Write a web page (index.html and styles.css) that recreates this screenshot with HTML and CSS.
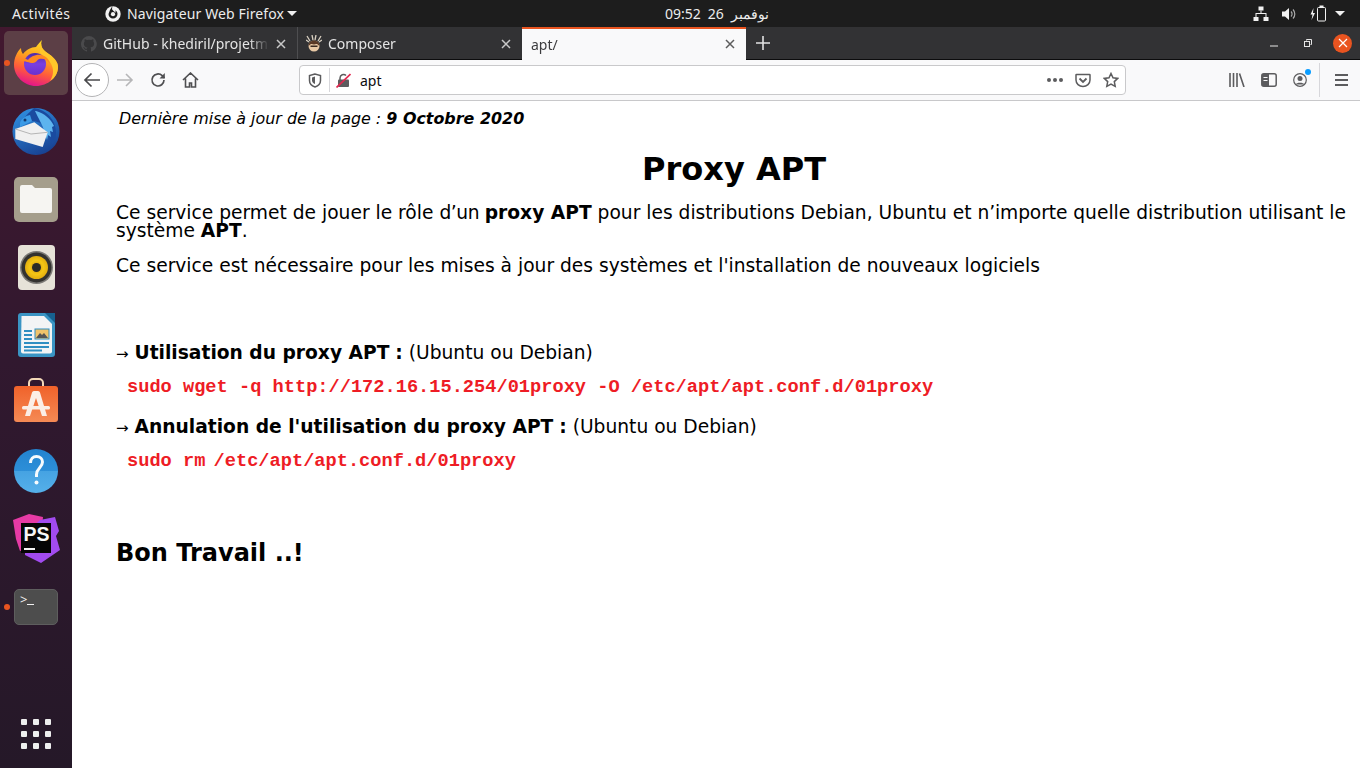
FILE: index.html
```html
<!DOCTYPE html>
<html lang="fr">
<head>
    <meta charset="UTF-8">
    <title>apt/</title>
    <link rel="stylesheet" href="styles.css">
</head>
<body>
    <div class="topbar">
        <span class="activities">Activités</span>
        <div class="app-menu">
            <svg class="app-icon" width="16" height="16" viewBox="0 0 16 16"><circle cx="8" cy="8" r="7.700" fill="#f2f2f2"/><path d="M3.500 8a4.500 4.500 0 0 0 9 0c0-1.700-.9-3-2.200-3.800l.5 2.600L8.500 5 7 3.300 7.400 0 5 4z" fill="#1d1d1d"/><circle cx="8" cy="8.200" r="2.100" fill="#f2f2f2"/></svg>
            <span class="app-name">Navigateur Web Firefox</span>
            <i class="caret"></i>
        </div>
        <div class="clock"><span>09:52</span><span>26</span><span lang="ar">نوفمبر</span></div>
        <div class="tray">
            <svg width="16" height="16" viewBox="0 0 16 16" fill="#f2f2f2"><rect x="5.500" y="0.500" width="5" height="4"/><rect x="0.500" y="11" width="5" height="4"/><rect x="10.500" y="11" width="5" height="4"/><path d="M7.500 4.500h1V7H13.500v4h-1V8H3.500v3h-1V7h5z"/></svg>
            <svg width="16" height="16" viewBox="0 0 16 16"><path d="M1 5.500h3L8 2v12l-4-3.500H1z" fill="#f2f2f2"/><path d="M10 5.500a3.500 3.500 0 0 1 0 5M12 3.500a6.500 6.500 0 0 1 0 9" fill="none" stroke="#aaa" stroke-width="1.200"/></svg>
            <svg width="20" height="18" viewBox="0 0 20 18"><path d="M4.500 3 1.500 9.500h2L2.500 15l3.500-7H4z" fill="#f2f2f2"/><rect x="8.500" y="2.500" width="8" height="13.500" rx="1" fill="none" stroke="#f2f2f2"/><rect x="10.500" y="0.500" width="4" height="2" fill="#f2f2f2"/></svg>
            <i class="caret tray-caret"></i>
        </div>
    </div>

    <div class="desktop">
        <nav class="dock">
            <div class="dock-item active">
                <i class="dot"></i>
                <svg width="44" height="46" viewBox="0 0 44 46">
                    <defs>
                        <linearGradient id="fxOuter" x1="0.700" y1="0" x2="0.400" y2="1"><stop offset="0" stop-color="#ffe226"/><stop offset="0.400" stop-color="#ffa21e"/><stop offset="0.700" stop-color="#ff5a3c"/><stop offset="1" stop-color="#e3148c"/></linearGradient>
                        <linearGradient id="fxGlobe" x1="0.500" y1="0" x2="0.500" y2="1"><stop offset="0" stop-color="#4c2aa8"/><stop offset="0.500" stop-color="#7a3fe0"/><stop offset="1" stop-color="#6a30d0"/></linearGradient>
                    </defs>
                    <path d="M28 0c-2 5 0 9 4 12 8 5 12 10 12 15 0 10-10 19-22 19S0 36 0 25c0-7 3-13 7-17 0 3 1 5 2 6 3-4 8-7 13-7 2-3 4-5 6-7z" fill="url(#fxOuter)"/>
                    <path d="M28 0c-2 5 0 9 4 12 8 5 12 10 12 15 0 6-3 11-8 14 3-5 4-10 2-15-2-6-8-10-12-13 0-5 1-9 2-13z" fill="#ffc72a"/>
                    <circle cx="21" cy="24" r="11" fill="url(#fxGlobe)"/>
                    <path d="M5 20c4-2 7-1 9 0 2-3 8-6 13-5 5 1 8 4 9 9-3-4-6-6-11-5-2 1-3 4-6 4-4 0-7-2-14-3z" fill="#ff8a1f"/>
                </svg>
            </div>
            <div class="dock-item">
                <svg width="48" height="48" viewBox="0 0 48 48">
                    <defs><linearGradient id="tbBg" x1="0.200" y1="0" x2="0.700" y2="1"><stop offset="0" stop-color="#2f8fe0"/><stop offset="1" stop-color="#173f90"/></linearGradient></defs>
                    <circle cx="24" cy="24.500" r="23.500" fill="url(#tbBg)"/>
                    <path d="M10 16C13 8 18 5 22 1c8 1 16 6 20 15 3 8 3 16-2 22-1-4-3-8-5-10l-2-8C28 14 20 12 10 16z" fill="#1a4ba0"/>
                    <path d="M24 4c8 2 15 8 18 15l-2 1 1 5-3-1 1 6-3-2-1 5-3-9c-1-6-6-13-9-20z" fill="#5db4ee"/>
                    <path d="M3.300 22 22.300 15.300 35.700 25.300 30.700 40 3.300 32z" fill="#f0f0f0"/>
                    <path d="M3.300 22 19 27 35.700 25.300" fill="none" stroke="#b5b5b5"/>
                    <path d="M8 16c1-4 5-7 10-8l2 6-12 6z" fill="#3a9ae6"/>
                    <circle cx="13" cy="13" r="1.500" fill="#123a70"/>
                </svg>
            </div>
            <div class="dock-item">
                <svg width="44" height="45" viewBox="0 0 44 45">
                    <rect width="44" height="45" rx="5" fill="#a59e8c"/>
                    <path d="M6 10a2 2 0 0 1 2-2h10l3 3h15a2 2 0 0 1 2 2v21a2 2 0 0 1-2 2H8a2 2 0 0 1-2-2z" fill="#f6f5f2"/>
                </svg>
            </div>
            <div class="dock-item">
                <svg width="37" height="45" viewBox="0 0 37 45">
                    <defs><radialGradient id="rbCone"><stop offset="0.200" stop-color="#d89f10"/><stop offset="0.600" stop-color="#f4c615"/><stop offset="1" stop-color="#e3ae0f"/></radialGradient></defs>
                    <rect width="37" height="45" rx="4" fill="#e6e2d8"/>
                    <circle cx="18.500" cy="22.500" r="16.500" fill="#7c7a76"/>
                    <circle cx="18.500" cy="22.500" r="15" fill="#33322f"/>
                    <circle cx="18.500" cy="22.500" r="11.500" fill="url(#rbCone)"/>
                    <circle cx="18.500" cy="22.500" r="4.500" fill="#2a2a28"/>
                </svg>
            </div>
            <div class="dock-item">
                <svg width="37" height="44" viewBox="0 0 37 44">
                    <path d="M3 0h34v41a3 3 0 0 1-3 3H3a3 3 0 0 1-3-3V3a3 3 0 0 1 3-3z" fill="#3a94c4"/>
                    <path d="M3.500 3H26l8 8v27.500a2 2 0 0 1-2 2H5a2 2 0 0 1-2-2z" fill="#f3f4f5"/>
                    <path d="M27 0h10v10z" fill="#16608f"/>
                    <g fill="#2f8ec2"><rect x="6" y="17" width="8" height="2"/><rect x="6" y="21" width="8" height="2"/><rect x="6" y="25" width="8" height="2"/><rect x="6" y="29" width="25" height="2"/><rect x="6" y="33" width="25" height="2"/><rect x="6" y="36.500" width="18" height="2"/></g>
                    <rect x="17" y="16" width="14" height="10" fill="#f0c36a" stroke="#2f8ec2"/>
                    <path d="M18 25l4-5 2 2 2-2 4 5z" fill="#555"/>
                </svg>
            </div>
            <div class="dock-item">
                <svg class="shop-icon" width="44" height="44" viewBox="0 0 44 44">
                    <defs><linearGradient id="shopBg" x1="0" y1="0" x2="0" y2="1"><stop offset="0" stop-color="#f0622a"/><stop offset="1" stop-color="#f58a55"/></linearGradient></defs>
                    <path d="M15 9V5a4 4 0 0 1 4-4h6a4 4 0 0 1 4 4v4" fill="none" stroke="#f3d9b8" stroke-width="2"/>
                    <rect y="8" width="44" height="36" rx="3" fill="url(#shopBg)"/>
                    <path d="M20 13h4a2 2 0 0 1 2 1.500l7 23.500h-5l-6-18-6 18h-5l7-23.500a2 2 0 0 1 2-1.500z" fill="#fbeee6"/>
                    <rect x="8" y="28" width="28" height="3.500" rx="1.500" fill="#fbeee6"/>
                </svg>
            </div>
            <div class="dock-item">
                <svg width="46" height="46" viewBox="0 0 46 46">
                    <defs><linearGradient id="helpBg" x1="0" y1="0" x2="0" y2="1"><stop offset="0" stop-color="#2383cf"/><stop offset="0.500" stop-color="#2d8fd8"/><stop offset="0.510" stop-color="#46a3e2"/><stop offset="1" stop-color="#55b0ea"/></linearGradient></defs>
                    <circle cx="23" cy="23" r="22" fill="url(#helpBg)"/>
                    <path d="M17.500 15c0-4 2.500-6.500 6-6.500s6 2.300 6 5.500c0 5.500-6 6-6 12.500v2.500" fill="none" stroke="#f7fbfd" stroke-width="3"/>
                    <circle cx="23.500" cy="34.500" r="2" fill="#f7fbfd"/>
                </svg>
            </div>
            <div class="dock-item">
                <svg width="48" height="50" viewBox="0 0 48 50">
                    <path d="M1 6 17 0l14 3-3 30-20 4-4-12z" fill="#e63aa5"/>
                    <path d="M28 6 43 3l4 14-3 5 4 14-19 13-16-8V20z" fill="#a24bf0"/>
                    <rect x="9" y="9" width="30" height="30" fill="#050505"/>
                    <text class="ps-text" x="11.500" y="27">PS</text>
                    <rect x="12" y="34" width="11" height="2" fill="#f4f4f4"/>
                </svg>
            </div>
            <div class="dock-item">
                <i class="dot"></i>
                <div class="term"><span>&gt;</span><b></b></div>
            </div>
            <div class="apps-grid">
                <i></i><i></i><i></i><i></i><i></i><i></i><i></i><i></i><i></i>
            </div>
        </nav>

        <div class="browser">
            <div class="tabbar">
                <div class="tab">
                    <svg class="favicon" width="16" height="16" viewBox="0 0 16 16"><path d="M8 0a8 8 0 0 0-2.500 15.600c.4.100.5-.2.500-.4v-1.400c-2.200.5-2.700-1-2.700-1-.4-.9-.9-1.200-.9-1.200-.7-.5.100-.5.100-.5.800.1 1.200.8 1.200.8.700 1.200 1.900.9 2.300.7.100-.5.300-.9.500-1.100-1.800-.2-3.600-.9-3.600-4 0-.9.300-1.600.8-2.100-.1-.2-.4-1 .1-2.100 0 0 .7-.2 2.200.8a7.600 7.600 0 0 1 4 0c1.500-1 2.200-.8 2.200-.8.500 1.100.2 1.900.1 2.100.5.600.8 1.300.8 2.100 0 3.100-1.900 3.700-3.700 3.900.3.300.6.800.6 1.500v2.200c0 .2.100.5.600.4A8 8 0 0 0 8 0z" fill="#4a4a4c"/></svg>
                    <span class="tab-title">GitHub - khediril/projetm</span>
                    <svg class="tab-close" width="12" height="12" viewBox="0 0 12 12"><path d="M2 2l8 8M10 2l-8 8" stroke="#c8c8c8" stroke-width="1.500"/></svg>
                </div>
                <div class="tab with-sep">
                    <svg class="favicon composer-icon" width="16" height="17" viewBox="0 0 16 17"><path d="M1 1l3 5M15 1l-3 5M0 5l3 2M16 5l-3 2M6 0l1 5M10 0L9 5" stroke="#d8cfc0" stroke-width="1.300"/><circle cx="8" cy="11" r="5.500" fill="#e9c9a5"/><path d="M2.500 11a5.500 5.500 0 0 1 11 0c-2-2.500-3.500-2.500-5.500-1.500-2-1-3.500-1-5.500 1.500z" fill="#5b3a26"/><rect x="4.500" y="10.500" width="7" height="1.500" fill="#3a2a20"/></svg>
                    <span class="tab-title">Composer</span>
                    <svg class="tab-close" width="12" height="12" viewBox="0 0 12 12"><path d="M2 2l8 8M10 2l-8 8" stroke="#c8c8c8" stroke-width="1.500"/></svg>
                </div>
                <div class="tab selected">
                    <span class="tab-title">apt/</span>
                    <svg class="tab-close" width="12" height="12" viewBox="0 0 12 12"><path d="M2 2l8 8M10 2l-8 8" stroke="#5c5c5c" stroke-width="1.500"/></svg>
                </div>
                <svg class="new-tab" width="14" height="14" viewBox="0 0 14 14"><path d="M7 0v14M0 7h14" stroke="#e2e2e2" stroke-width="1.600"/></svg>
                <div class="win-controls">
                    <svg width="10" height="10" viewBox="0 0 10 10"><rect x="1" y="7.500" width="8" height="1" fill="#e6e6e6"/></svg>
                    <svg width="10" height="10" viewBox="0 0 10 10" fill="none" stroke="#e6e6e6"><rect x="1.500" y="3.500" width="5" height="5"/><path d="M3.500 2.500V1.500h5v5h-1"/></svg>
                    <div class="win-close"><svg width="10" height="10" viewBox="0 0 10 10"><path d="M1 1l8 8M9 1l-8 8" stroke="#fff" stroke-width="1.200"/></svg></div>
                </div>
            </div>

            <div class="toolbar">
                <div class="back-btn"><svg width="18" height="16" viewBox="0 0 18 16" fill="none" stroke="#4a4a4c" stroke-width="1.700"><path d="M17 8H2M8.500 1.500 2 8l6.500 6.500"/></svg></div>
                <svg class="tool" width="17" height="16" viewBox="0 0 17 16" fill="none" stroke="#b6b6b8" stroke-width="1.600"><path d="M0 8h15M9 2l6 6-6 6"/></svg>
                <svg class="tool" width="16" height="16" viewBox="0 0 16 16" fill="none" stroke="#4f4f51" stroke-width="1.700"><path d="M14 8a6 6 0 1 1-1.800-4.300L14.500 6"/><path d="M14.800 1v5.500H9.500" fill="#4f4f51" stroke="none"/></svg>
                <svg class="tool" width="17" height="16" viewBox="0 0 17 16" fill="none" stroke="#4f4f51" stroke-width="1.600"><path d="M1 8 8.500 1 16 8M3.500 6.500V15h4v-4h2v4h4V6.500"/></svg>
                <div class="urlbar">
                    <svg class="shield" width="14" height="15" viewBox="0 0 14 15" fill="none"><path d="M7 1 1.500 2.500v5C1.500 11 4 13 7 14c3-1 5.500-3 5.500-6.500v-5z" stroke="#5c5c5e" stroke-width="1.500"/><path d="M7 3.500 4 4.500v3C4 9.500 5.500 10.500 7 11z" fill="#5c5c5e"/></svg>
                    <i class="url-sep"></i>
                    <svg class="lock" width="15" height="15" viewBox="0 0 15 15"><path d="M4 7V5a3.500 3.500 0 0 1 6-2.400" fill="none" stroke="#5c5c5e" stroke-width="1.500"/><rect x="2" y="6.500" width="11" height="7.500" rx="1" fill="#5c5c5e"/><path d="M.5 14.500 14.500 1" stroke="#e22850" stroke-width="1.700"/></svg>
                    <span class="url-text">apt</span>
                    <span class="url-dots"><i></i><i></i><i></i></span>
                    <svg width="16" height="15" viewBox="0 0 16 15" fill="none" stroke="#5c5c5e" stroke-width="1.500"><path d="M1.500 1.500h13a.5.5 0 0 1 .5.500v5a7 6.500 0 0 1-14 0V2a.5.5 0 0 1 .5-.5z"/><path d="M4.500 5.500 8 9l3.500-3.500" stroke-width="1.800"/></svg>
                    <svg width="16" height="16" viewBox="0 0 16 16" fill="none" stroke="#5c5c5e" stroke-width="1.500"><path d="m8 1.500 2 4.300 4.700.6-3.400 3.200.9 4.700L8 12l-4.200 2.300.9-4.700L1.300 6.400 6 5.800z"/></svg>
                </div>
                <div class="tool-group">
                    <svg width="16" height="14" viewBox="0 0 16 14" fill="none" stroke="#5c5c5e" stroke-width="1.600"><path d="M1 0v14M4.500 0v14M8 0v14M10.500.5l4.500 13.500"/></svg>
                    <svg width="16" height="14" viewBox="0 0 16 14" fill="none" stroke="#5c5c5e" stroke-width="1.500"><rect x=".8" y=".8" width="14.400" height="12.400" rx="2"/><rect x="1" y="1" width="7" height="12" fill="#5c5c5e" stroke="none"/><path d="M2.500 4.500h4M2.500 7.500h4" stroke="#f9f9fa" stroke-width="1.200"/></svg>
                    <span class="account"><svg width="14" height="14" viewBox="0 0 14 14" fill="none" stroke="#5c5c5e"><circle cx="7" cy="7" r="6.300" stroke-width="1.200"/><circle cx="7" cy="5.500" r="2.500" fill="#5c5c5e" stroke="none"/><path d="M2.500 11.500c1-2.500 8-2.500 9 0z" fill="#5c5c5e" stroke="none"/></svg><i></i></span>
                    <i class="tool-sep"></i>
                    <svg width="13" height="12" viewBox="0 0 13 12" fill="#5c5c5e"><rect width="13" height="2"/><rect y="5" width="13" height="2"/><rect y="10" width="13" height="2"/></svg>
                </div>
            </div>

            <main class="page">
                <p class="updated">Dernière mise à jour de la page : <b>9 Octobre 2020</b></p>
                <h1>Proxy APT</h1>
                <p>Ce service permet de jouer le rôle <span class="tight">d’un </span><b>proxy APT</b> pour les distributions Debian, Ubuntu et <span class="tight-less">n’importe</span> quelle distribution utilisant le système <b>APT</b>.</p>
                <p>Ce service est nécessaire pour les mises à jour des systèmes et l'installation de nouveaux logiciels</p>
                <p class="step first-step"><span class="arrow">→</span> <b>Utilisation du proxy APT</b> <b>:</b> (Ubuntu ou Debian)</p>
                <pre>sudo wget -q http://172.16.15.254/01proxy -O /etc/apt/apt.conf.d/01proxy</pre>
                <p class="step"><span class="arrow">→</span> <b>Annulation de l'utilisation du proxy APT</b> <b>:</b> (Ubuntu ou Debian)</p>
                <pre>sudo rm<span class="thin-space"> </span>/etc/apt/apt.conf.d/01proxy</pre>
                <h2>Bon Travail ..!</h2>
            </main>
        </div>
    </div>
</body>
</html>
```

FILE: styles.css
```css
*,
*::before,
*::after{
    padding: 0;
    margin: 0;
    box-sizing: border-box;
}
html,
body{
    height: 100%;
    overflow: hidden;
}
body{
    display: flex;
    flex-direction: column;
    background-color: #ffffff;
    font-family: "Noto Sans", sans-serif;
}
i{
    display: block;
}

/* gnome top bar */
.topbar{
    height: 27px;
    flex: none;
    display: flex;
    align-items: center;
    background-color: #1d1d1d;
    color: #ececec;
    font-size: 14px;
}
.activities{
    margin-left: 12px;
    width: 93px;
    letter-spacing: 0.4px;
}
.app-menu{
    width: 560px;
    display: flex;
    align-items: center;
    gap: 6px;
}
.app-name{
    letter-spacing: 0.13px;
}
.caret{
    width: 0;
    height: 0;
    border-left: 5px solid transparent;
    border-right: 5px solid transparent;
    border-top: 5px solid #f0f0f0;
}
.app-menu .caret{
    margin-left: -3px;
}
.clock{
    display: flex;
    gap: 7px;
    font-size: 14px;
}
.tray{
    margin-left: auto;
    margin-right: 15px;
    display: flex;
    align-items: center;
    gap: 12px;
}
.tray-caret{
    margin-left: -6px;
}

/* layout */
.desktop{
    flex: 1;
    display: flex;
    min-height: 0;
}
.dock{
    width: 72px;
    flex: none;
    display: flex;
    flex-direction: column;
    align-items: center;
    gap: 4px;
    padding: 4px 0 19px;
    background: linear-gradient(180deg, #42182f 0%, #31182f 45%, #251828 100%);
}
.dock-item{
    width: 64px;
    height: 64px;
    flex: none;
    display: flex;
    align-items: center;
    justify-content: center;
    position: relative;
}
.dock-item.active{
    background-color: #5c3f46;
    border-radius: 5px;
}
.dot{
    position: absolute;
    left: 0;
    top: 29px;
    width: 6px;
    height: 6px;
    border-radius: 50%;
    background-color: #e95420;
}
.shop-icon{
    margin-bottom: 6px;
}
.ps-text{
    font-family: "Liberation Sans", sans-serif;
    font-weight: bold;
    font-size: 19.500px;
    fill: #f6f6f6;
}
.term{
    width: 44px;
    height: 36px;
    background-color: #4d4d4d;
    border: 1px solid #5e5e5e;
    border-radius: 5px;
    display: flex;
    align-items: flex-start;
    padding: 0 5px;
    color: #f0f0f0;
    font-size: 13px;
}
.term b{
    width: 7px;
    height: 1px;
    margin: 14px 0 0 0;
    background-color: #f0f0f0;
}
.apps-grid{
    margin-top: auto;
    display: grid;
    grid-template-columns: repeat(3, 6px);
    gap: 6px;
}
.apps-grid i{
    height: 6px;
    border-radius: 1px;
    background-color: #eeeeee;
}

/* browser */
.browser{
    flex: 1;
    min-width: 0;
    display: flex;
    flex-direction: column;
}
.tabbar{
    height: 33px;
    flex: none;
    display: flex;
    background-color: #323234;
    border-bottom: 1px solid #0c0c0d;
    color: #e4e4e4;
    font-size: 14px;
}
.tab{
    width: 225px;
    height: 33px;
    display: flex;
    align-items: center;
    padding: 0 9px;
    gap: 6px;
}
.tab.with-sep{
    position: relative;
}
.tab.with-sep::before{
    content: "";
    position: absolute;
    left: 0;
    top: 0;
    bottom: 1px;
    width: 1px;
    background-color: #4e4e50;
}
.tab-title{
    flex: 1;
    white-space: nowrap;
    overflow: hidden;
    -webkit-mask-image: linear-gradient(90deg, #000 88%, transparent);
    mask-image: linear-gradient(90deg, #000 88%, transparent);
}
.tab.selected{
    width: 224px;
    background-color: #f9f9fa;
    color: #3c3c3e;
    border-top: 2px solid #e95420;
    padding-bottom: 1px;
}
.favicon{
    flex: none;
}
.tab-close{
    flex: none;
    margin-right: 1px;
}
.new-tab{
    margin: 9px 0 0 10px;
}
.win-controls{
    margin-left: auto;
    display: flex;
    align-items: center;
    gap: 24px;
    padding-right: 8px;
}
.win-close{
    width: 19px;
    height: 19px;
    margin-left: -4px;
    border-radius: 50%;
    background-color: #e95420;
    display: flex;
    align-items: center;
    justify-content: center;
}
.toolbar{
    height: 41px;
    flex: none;
    display: flex;
    align-items: center;
    background-color: #f9f9fa;
    border-bottom: 1px solid #c8c8ca;
    padding-left: 3px;
}
.back-btn{
    width: 34px;
    height: 34px;
    border: 1px solid #b4b4b6;
    border-radius: 50%;
    background-color: #ffffff;
    display: flex;
    align-items: center;
    justify-content: center;
}
.tool{
    flex: none;
    margin-left: 8px;
}
.tool + .tool{
    margin-left: 16px;
}
.urlbar{
    width: 827px;
    height: 30px;
    margin-left: 100px;
    display: flex;
    align-items: center;
    gap: 12px;
    background-color: #ffffff;
    border: 1px solid #c9c9cb;
    border-radius: 4px;
    padding: 0 6px 0 8px;
}
.url-sep{
    width: 1px;
    height: 24px;
    margin-left: -5px;
    background-color: #d7d7db;
}
.lock{
    margin-left: -6px;
}
.url-text{
    flex: 1;
    margin-left: -3px;
    color: #0c0c0d;
    font-size: 14px;
}
.url-dots{
    display: flex;
    gap: 2px;
}
.url-dots i{
    width: 4px;
    height: 4px;
    border-radius: 50%;
    background-color: #5c5c5e;
}
.tool-group{
    display: flex;
    align-items: center;
    gap: 16px;
    margin-left: 103px;
}
.account{
    position: relative;
    display: flex;
}
.account i{
    position: absolute;
    right: -4px;
    top: -4px;
    width: 6px;
    height: 6px;
    border-radius: 50%;
    background-color: #0a9dff;
}
.tool-sep{
    width: 1px;
    height: 34px;
    margin: 0 -1px 0 -4px;
    background-color: #d7d7db;
}

/* page content */
.page{
    flex: 1;
    padding: 9px 8px 0 44px;
    font-family: "DejaVu Sans", sans-serif;
    font-size: 14pt;
    line-height: 18px;
    color: #000000;
    overflow: hidden;
}
.page p{
    margin-bottom: 17px;
}
.page p.updated{
    padding-left: 3px;
    font-size: 15.920px;
    font-style: italic;
    margin-bottom: 0;
}
.tight{
    letter-spacing: -0.4px;
}
.tight-less{
    letter-spacing: -0.11px;
}
h1{
    text-align: center;
    font-size: 32px;
    line-height: 38px;
    margin: 22px 0 16px;
}
.page p.first-step{
    margin-top: 69px;
}
.page p.step{
    margin-bottom: 15px;
}
.arrow{
    font-size: 15px;
}
pre{
    font-family: "Liberation Mono", monospace;
    font-weight: bold;
    font-size: 14pt;
    line-height: 18px;
    color: #ee1c25;
    padding-left: 11px;
    margin-bottom: 22px;
}
.thin-space{
    letter-spacing: -3px;
}
h2{
    font-size: 24px;
    line-height: 28px;
    margin-top: 69px;
}
```
